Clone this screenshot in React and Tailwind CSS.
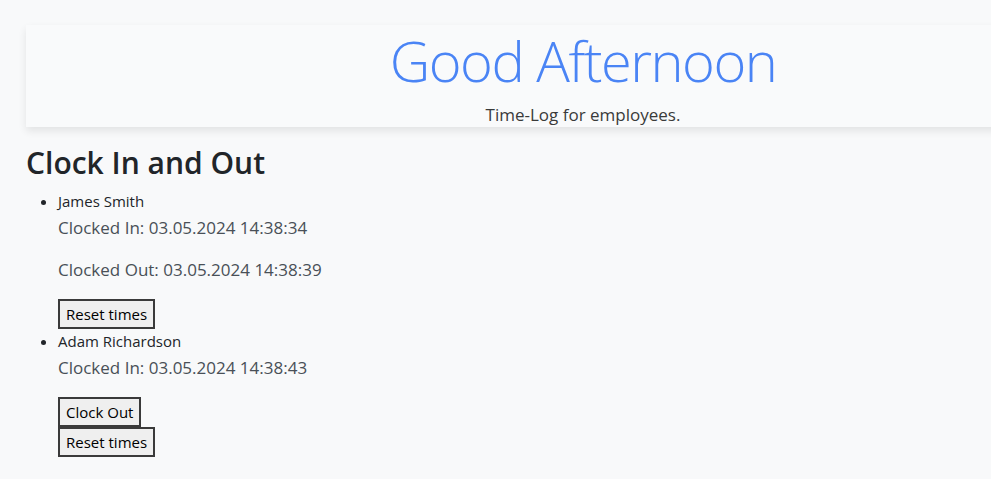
const employees = [
  { name: 'James Smith', clockedIn: '03.05.2024 14:38:34', clockedOut: '03.05.2024 14:38:39' },
  { name: 'Adam Richardson', clockedIn: '03.05.2024 14:38:43', clockedOut: null },
];

function Employee({ emp }) {
  return (
    <li className="text-[15px] leading-[24px] text-[#212529]">
      {emp.name}
      <p className="mt-[2px] mb-4 text-[17px] leading-[26px] text-[#495057]">Clocked In: {emp.clockedIn}</p>
      {emp.clockedOut && (
        <p className="mb-4 text-[17px] leading-[26px] text-[#495057]">Clocked Out: {emp.clockedOut}</p>
      )}
      {!emp.clockedOut && (
        <button className="block h-[30px] border-2 border-[#3a3a3a] bg-[#efefef] px-[6px] text-[15px] text-black">
          Clock Out
        </button>
      )}
      <button className="block h-[30px] border-2 border-[#3a3a3a] bg-[#efefef] px-[6px] text-[15px] text-black">
        Reset times
      </button>
    </li>
  );
}

export default function App() {
  return (
    <div className="min-h-[479px] w-full overflow-hidden bg-[#f8f9fa] font-['Open_Sans',sans-serif]">
      <div className="px-[26px] pt-[25px]">
        {/* Header */}
        <div className="w-[1114px] h-[102px] bg-[#f9fafb] shadow-[0_4px_8px_rgba(0,0,0,0.09)] flex flex-col items-center">
          <h1 className="mt-[2px] text-[56px] leading-[66px] font-light text-[#4a84f5] tracking-[-1.5px]">Good Afternoon</h1>
          <p className="mt-[11px] text-[17px] leading-[22px] text-[#3a3a3a]">Time-Log for employees.</p>
        </div>

        <h2 className="mt-[17px] text-[30px] leading-[38px] font-semibold text-[#212529]">Clock In and Out</h2>
        <ul className="mt-[7px] list-disc pl-[32px]">
          {employees.map((emp) => (
            <Employee key={emp.name} emp={emp} />
          ))}
        </ul>
      </div>
    </div>
  );
}
